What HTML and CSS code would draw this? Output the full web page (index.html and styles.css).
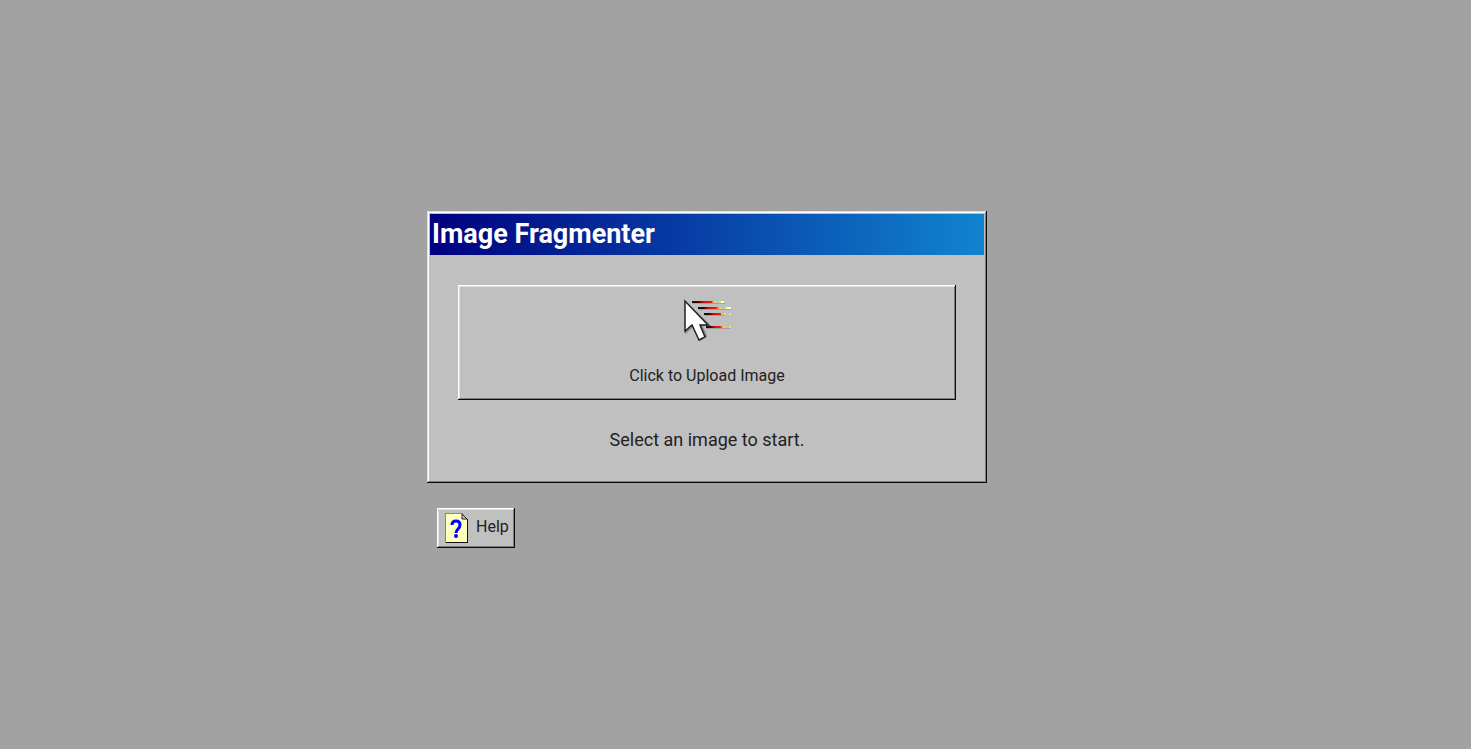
FILE: index.html
```
<!DOCTYPE html>
<html lang="en">
<head>
<meta charset="utf-8">
<meta name="viewport" content="width=device-width, initial-scale=1">
<title>Image Fragmenter</title>
<link rel="stylesheet" href="styles.css">
</head>
<body>
<main class="desktop">
  <section class="window">
    <h1 class="title-bar">Image Fragmenter</h1>
    <div class="window-body">
      <button class="upload raised" type="button">
        <svg class="upload-icon" viewBox="0 0 50 44" aria-hidden="true">
          <defs>
            <linearGradient id="trail"><stop offset="0" stop-color="#111"/><stop offset=".3" stop-color="#400"/><stop offset=".6" stop-color="#c11"/><stop offset="1" stop-color="#f01818"/></linearGradient>
          </defs>
          <g fill="#8d8a84" opacity=".6">
            <path d="M11 4h32v1H11zM17 10h32v1H17zM23 16h20v1H23zM24 29h24v1H24z"/>
          </g>
          <g fill="url(#trail)">
            <rect x="10" y="2" width="20" height="2"/><rect x="16" y="8" width="19" height="2"/>
            <rect x="22" y="14" width="17" height="2"/><rect x="24" y="27" width="15" height="2"/>
          </g>
          <path fill="#f08a20" d="M30 2h2v2h-2zM35 8h2v2h-2zM39 27h2v2h-2z"/>
          <path fill="#eee32c" d="M32 2h2v2h-2zM37 8h2v2h-2zM42 14h2v2h-2zM41 27h2v2h-2z"/>
          <path fill="#fff" d="M39 2h3v2h-3zM45 8h4v2h-4z"/>
          <path fill="#eee45a" d="M37 2h2v2h-2zM43 8h2v2h-2zM47 14h2v2h-2zM47 27h2v2h-2z"/>
          <path d="M4 4v29l7-6 7 14 6-4-5-11h8z" fill="none" stroke="#888" stroke-width="2"/>
          <path d="M3 2v30l7-6 7 15 6-3-5-12h8z" fill="#fff" stroke="#222" stroke-width="1.5"/>
        </svg>
        <span>Click to Upload Image</span>
      </button>
      <p class="status">Select an image to start.</p>
    </div>
  </section>
  <button class="help raised" type="button">
    <svg class="help-icon" viewBox="0 0 24 31" aria-hidden="true">
      <path fill="#ffffbe" d="M1 1h16l6 6v23H1z"/>
      <path fill="#848484" d="M0 0h18v1H1v29H0z"/>
      <path fill="#111" d="M22 6h1v24H1v-1h21z"/>
      <path d="M17 1v5h5z" fill="#c8c8c8" stroke="#222"/>
      <path d="M7 12q0-4 4-4t4 4q0 2-2 4t-2 4" fill="none" stroke="#00f" stroke-width="3"/>
      <circle cx="11" cy="23" r="2" fill="#00f"/>
    </svg>
    <span class="help-label">Help</span>
  </button>
</main>
</body>
</html>
```
FILE: styles.css
```
* {
  box-sizing: border-box;
}

body {
  margin: 0;
  background: #a2a2a2;
  color: #222;
  font-family: Roboto, "Liberation Sans", sans-serif;
}

.desktop {
  display: flex;
  flex-direction: column;
  justify-content: center;
  align-items: flex-start;
  gap: 25px;
  width: 100%;
  max-width: 617px;
  min-height: 100vh;
  margin: 0 auto;
  padding-top: 10px;
}

.window {
  width: 100%;
  max-width: 560px;
  padding: 3px;
  background: #c0c0c0;
  box-shadow: inset -1px -1px #0a0a0a, inset 1px 1px #dfdfdf, inset -2px -2px #808080, inset 2px 2px #fff;
}

.title-bar {
  margin: 0;
  padding: 0 2px;
  background: linear-gradient(90deg, #000080, #1084d0);
  color: #fff;
  font-size: 27px;
  font-weight: 700;
  line-height: 41px;
}

.window-body {
  padding: 30px 28px 28px;
}

.raised {
  border: 0;
  background: #c0c0c0;
  box-shadow: inset -1px -1px #0a0a0a, inset 1px 1px #fff, inset -2px -2px #808080, inset 2px 2px #dfdfdf;
  color: inherit;
  font-family: inherit;
}

.upload {
  display: flex;
  flex-direction: column;
  align-items: center;
  gap: 21px;
  width: 100%;
  padding: 14px 12px 12px;
  font-size: 16px;
  line-height: 24px;
}

.upload-icon {
  width: 50px;
  height: 44px;
}

.status {
  margin: 28px 0 0;
  font-size: 18px;
  line-height: 24px;
  text-align: center;
}

.help {
  display: flex;
  align-items: center;
  gap: 7px;
  height: 40px;
  margin-left: 10px;
  padding: 0 6px 0 8px;
  font-size: 16px;
}

.help-icon {
  width: 24px;
  height: 31px;
}

.help-label {
  padding-bottom: 4px;
}
```
